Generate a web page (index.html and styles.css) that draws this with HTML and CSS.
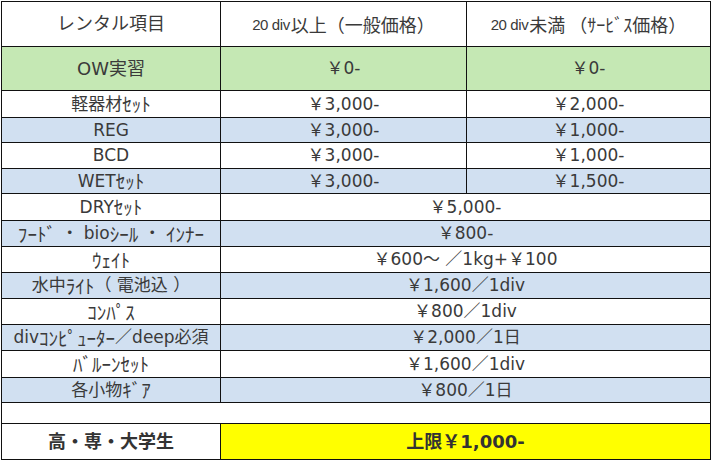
FILE: index.html
```html
<!DOCTYPE html>
<html lang="ja">
<head>
<meta charset="utf-8">
<title>レンタル料金表</title>
<link rel="stylesheet" href="styles.css">
</head>
<body>
<div class="sheet">
  <div class="cell head-big">レンタル項目</div>
  <div class="cell head"><span class="lat">20 div</span>以上（一般価格）</div>
  <div class="cell head"><span class="lat">20 div</span>未満 （<span class="kana">ｻｰﾋﾞｽ</span>価格）</div>

  <div class="cell green big">OW実習</div>
  <div class="cell green">￥0-</div>
  <div class="cell green">￥0-</div>

  <div class="cell">軽器材<span class="kana">ｾｯﾄ</span></div>
  <div class="cell">￥3,000-</div>
  <div class="cell">￥2,000-</div>

  <div class="cell blue">REG</div>
  <div class="cell blue">￥3,000-</div>
  <div class="cell blue">￥1,000-</div>

  <div class="cell">BCD</div>
  <div class="cell">￥3,000-</div>
  <div class="cell">￥1,000-</div>

  <div class="cell blue">WET<span class="kana">ｾｯﾄ</span></div>
  <div class="cell blue">￥3,000-</div>
  <div class="cell blue">￥1,500-</div>

  <div class="cell">DRY<span class="kana">ｾｯﾄ</span></div>
  <div class="cell span2">￥5,000-</div>

  <div class="cell blue"><span class="kana">ﾌｰﾄﾞ</span>&nbsp;・&nbsp;bio<span class="kana">ｼｰﾙ</span>&nbsp;・&nbsp;<span class="kana">ｲﾝﾅｰ</span></div>
  <div class="cell blue span2">￥800-</div>

  <div class="cell"><span class="kana">ｳｪｲﾄ</span></div>
  <div class="cell span2">￥600～ ／1kg+￥100</div>

  <div class="cell blue">水中<span class="kana">ﾗｲﾄ</span>（ 電池込 ）</div>
  <div class="cell blue span2">￥1,600／1div</div>

  <div class="cell"><span class="kana">ｺﾝﾊﾟｽ</span></div>
  <div class="cell span2">￥800／1div</div>

  <div class="cell blue">div<span class="kana">ｺﾝﾋﾟｭｰﾀｰ</span>／deep必須</div>
  <div class="cell blue span2">￥2,000／1日</div>

  <div class="cell"><span class="kana">ﾊﾞﾙｰﾝｾｯﾄ</span></div>
  <div class="cell span2">￥1,600／1div</div>

  <div class="cell blue">各小物<span class="kana">ｷﾞｱ</span></div>
  <div class="cell blue span2">￥800／1日</div>

  <div class="cell span3"></div>

  <div class="cell bold">高・専・大学生</div>
  <div class="cell yellow bold span2">上限￥1,000-</div>
</div>
</body>
</html>
```

FILE: styles.css
```css
html, body {
  margin: 0;
  padding: 0;
  background: #ffffff;
}

body {
  font-family: "DejaVu Sans", "Noto Sans CJK JP", sans-serif;
  color: #3a3a3a;
}

.sheet {
  display: grid;
  grid-template-columns: 218px 245px 243px;
  grid-template-rows: 44px 43px 26px 24px 25px 24px 26px 25px 25px 25px 25px 25px 26px 24px 20px 35px;
  gap: 1px;
  padding: 1px;
  background: #111111;
  width: max-content;
  margin: 1px 0 0 1px;
}

.cell {
  display: flex;
  align-items: center;
  justify-content: center;
  background: #ffffff;
  font-size: 17px;
  line-height: 1;
  white-space: nowrap;
}

.kana {
  font-family: "Noto Sans CJK JP", sans-serif;
  font-size: 1.12em;
  line-height: 1;
}

.head-big,
.big {
  font-size: 18px;
}

.head {
  font-family: "Noto Sans CJK JP", sans-serif;
  font-size: 18px;
}

.head .kana {
  font-size: 1em;
}

.head .lat {
  font-family: "Liberation Sans", sans-serif;
  font-size: 15px;
  letter-spacing: -0.4px;
  margin-right: 1px;
}

.green {
  background: #c5e8b4;
}

.blue {
  background: #d1e0f1;
}

.yellow {
  background: #ffff00;
}

.bold {
  font-weight: bold;
  font-size: 18px;
  color: #333333;
}

.span2 {
  grid-column: span 2;
}

.span3 {
  grid-column: span 3;
}
```
